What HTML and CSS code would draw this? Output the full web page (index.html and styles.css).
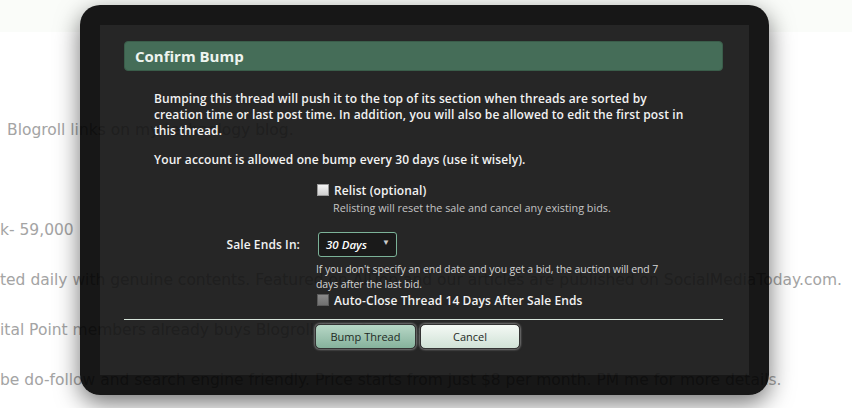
FILE: index.html
```html
<!DOCTYPE html>
<html lang="en">
<head>
    <meta charset="UTF-8">
    <title>Confirm Bump</title>
    <link rel="stylesheet" href="styles.css">
</head>
<body>
    <!-- Page behind the dialog -->
    <div class="top-band"></div>
    <div class="page">
        <div class="page-line indent">Blogroll links on my technology blog.</div>
        <div class="page-line"></div>
        <div class="page-line">k- 59,000</div>
        <div class="page-line">ted daily with genuine contents. Featured on AllTop and our articles are published on SocialMediaToday.com.</div>
        <div class="page-line">ital Point members already buys Blogroll links from me.</div>
        <div class="page-line">be do-follow and search engine friendly. Price starts from just $8 per month. PM me for more details.</div>
    </div>

    <!-- Confirm Bump dialog -->
    <div class="overlay">
        <div class="overlay-inner">
            <h2 class="dialog-title">Confirm Bump</h2>

            <div class="dialog-body">
                <p class="explain">Bumping this thread will push it to the top of its section when threads are sorted by<br>
                    creation time or last post time. In addition, you will also be allowed to edit the first post in<br>
                    this thread.</p>
                <p class="explain limit">Your account is allowed one bump every 30 days (use it wisely).</p>

                <div class="form-row relist-row">
                    <div class="row-label"></div>
                    <div class="row-field">
                        <label class="check"><span class="box"></span>Relist (optional)</label>
                        <div class="hint hint-indent">Relisting will reset the sale and cancel any existing bids.</div>
                    </div>
                </div>

                <div class="form-row ends-row">
                    <div class="row-label">Sale Ends In:</div>
                    <div class="row-field">
                        <div class="select"><span>30 Days</span><span class="arrow">&#9660;</span></div>
                    </div>
                </div>

                <div class="form-row">
                    <div class="row-label"></div>
                    <div class="row-field">
                        <div class="hint explain-end">If you don't specify an end date and you get a bid, the auction will end 7<br>days after the last bid.</div>
                        <label class="check"><span class="box box-dark"></span>Auto-Close Thread 14 Days After Sale Ends</label>
                    </div>
                </div>
            </div>

            <div class="divider"></div>

            <div class="form-row buttons-row">
                <div class="row-label"></div>
                <div class="buttons">
                    <button class="btn btn-primary">Bump Thread</button>
                    <button class="btn btn-cancel">Cancel</button>
                </div>
            </div>
        </div>
    </div>
</body>
</html>
```

FILE: styles.css
```css
/* General styling */
body, html {
    margin: 0;
    padding: 0;
    background: #ffffff;
    overflow: hidden;
}

.top-band {
    height: 32px;
    background: #fafcf9;
}

.page {
    padding-top: 73px;
    font-family: "DejaVu Sans", sans-serif;
    font-size: 15.5px;
    color: #a4a4a4;
    white-space: nowrap;
}

.page-line {
    height: 50px;
    line-height: 50px;
}

.indent {
    padding-left: 7px;
}

/* Dialog */
.overlay {
    position: absolute;
    z-index: 10;
    left: 80px;
    top: 5px;
    width: 689px;
    height: 390px;
    box-sizing: border-box;
    padding: 20px;
    border-radius: 20px;
    background: rgba(0, 0, 0, 0.91);
    box-shadow: 0 8px 24px rgba(0, 0, 0, 0.55);
}

.overlay-inner {
    height: 100%;
    box-sizing: border-box;
    padding: 16px 26px 0 24px;
    background: rgba(255, 255, 255, 0.065);
    font-family: "Open Sans", "Noto Sans", sans-serif;
    color: #f2f2f2;
}

.dialog-title {
    margin: 0;
    height: 30px;
    box-sizing: border-box;
    padding: 0 10px;
    line-height: 28px;
    font-size: 15px;
    font-weight: 700;
    color: #eef4ef;
    background: #456d58;
    border: 1px solid #3a5d4a;
    border-radius: 4px;
}

.dialog-body {
    padding: 0 0 0 6px;
}

.explain {
    margin: 20px 0 0 24px;
    font-size: 12px;
    font-weight: 600;
    line-height: 16px;
    letter-spacing: 0.1px;
    white-space: nowrap;
}

.limit {
    margin-top: 13px;
}

.form-row {
    display: grid;
    grid-template-columns: 186px 1fr;
}

.relist-row {
    margin-top: 15px;
}

.ends-row {
    margin-top: 17px;
    align-items: center;
}

.row-label {
    text-align: right;
    padding-right: 16px;
    font-size: 12px;
    font-weight: 600;
    letter-spacing: 0.1px;
}

.check {
    display: flex;
    align-items: center;
    font-size: 12px;
    font-weight: 600;
    letter-spacing: 0.1px;
    line-height: 16px;
    margin-left: 1px;
}

.box {
    width: 12px;
    height: 12px;
    margin-right: 5px;
    margin-top: -3px;
    background: linear-gradient(#f4f4f4, #cfcfcf);
    border: 1px solid #9a9a9a;
    box-sizing: border-box;
}

.box-dark {
    background: linear-gradient(#8a8a8a, #707070);
    border-color: #5a5a5a;
}

.hint {
    font-size: 10.8px;
    line-height: 15px;
    color: #c4c4c4;
}

.hint-indent {
    margin-top: 1px;
    padding-left: 17px;
}

.explain-end {
    margin-top: 5px;
    margin-bottom: 1px;
    font-size: 10.5px;
    letter-spacing: -0.1px;
    color: #d6d6d6;
    white-space: nowrap;
}

.select {
    width: 79px;
    height: 25px;
    box-sizing: border-box;
    display: flex;
    align-items: center;
    justify-content: space-between;
    padding: 0 6px 0 7px;
    margin-left: 2px;
    background: #1a1a1a;
    border: 1px solid #7bb298;
    border-radius: 3px;
    font-size: 11.5px;
    font-style: italic;
    font-weight: 600;
    color: #ffffff;
}

.arrow {
    font-size: 8px;
    font-style: normal;
    color: #cccccc;
    margin-top: -6px;
}

.divider {
    height: 1px;
    margin-top: 10px;
    background: #d6e4da;
}

.buttons-row {
    margin-top: 4px;
    grid-template-columns: 191px 1fr;
}

.buttons {
    display: flex;
    gap: 4px;
}

.btn {
    height: 25px;
    padding: 0;
    font-family: "Open Sans", "Noto Sans", sans-serif;
    font-size: 11px;
    color: #1e2a24;
    border: 1px solid #333;
    border-radius: 5px;
    box-shadow: 0 0 2px 1px rgba(170, 170, 170, 0.6);
    cursor: pointer;
}

.btn-primary {
    width: 101px;
    background: linear-gradient(#b7d7c6, #86b29c);
}

.btn-cancel {
    width: 100px;
    background: linear-gradient(#f4f9f5, #d0e2d6);
}
```
